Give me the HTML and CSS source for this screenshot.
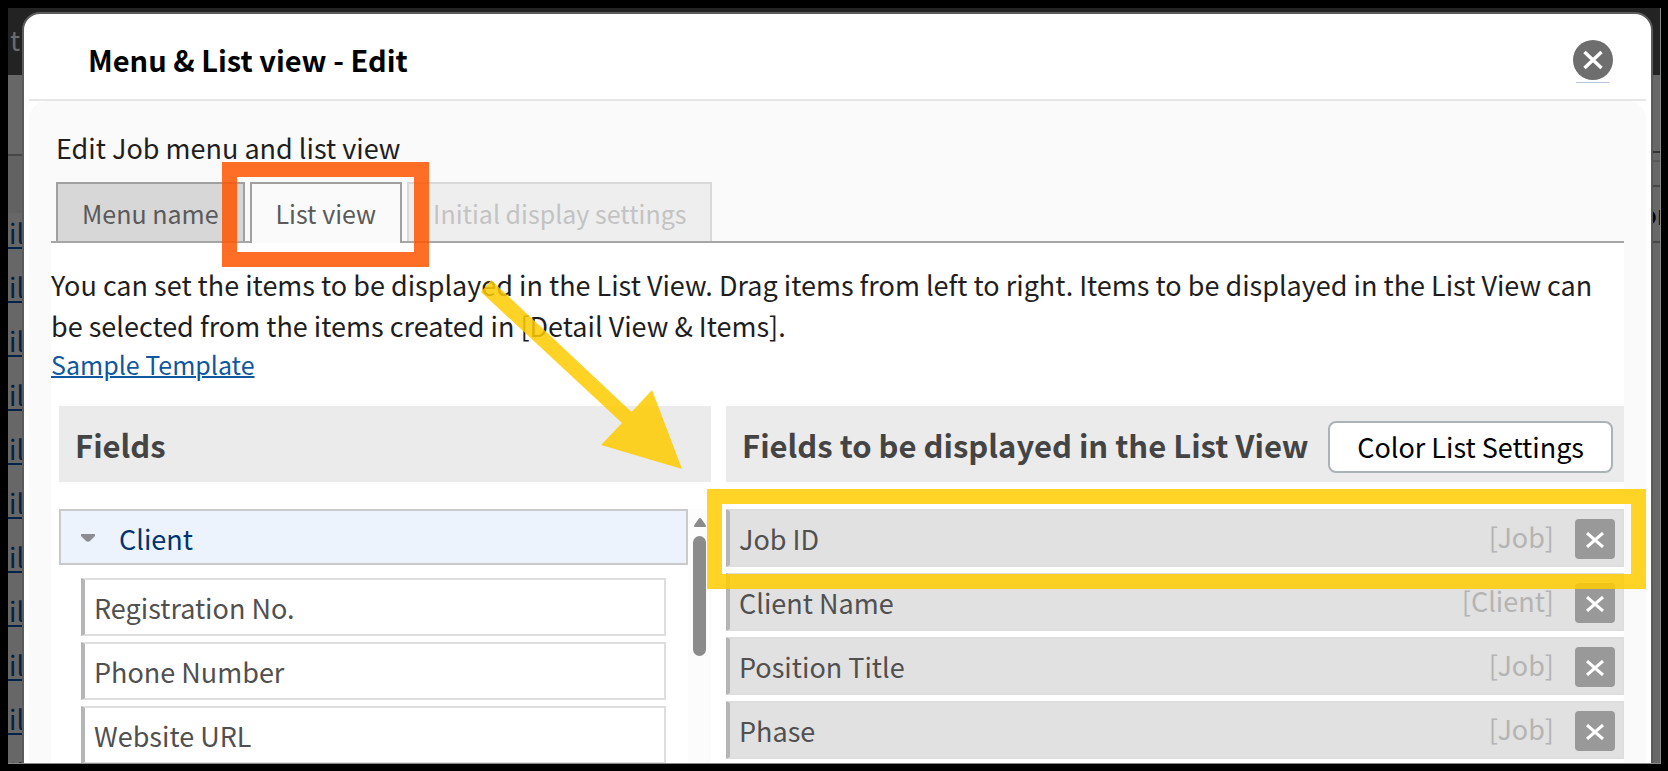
FILE: index.html
```
<!DOCTYPE html>
<html lang="en">
<head>
    <meta charset="UTF-8">
    <meta name="viewport" content="width=device-width, initial-scale=1.0">
    <title>Menu &amp; List view - Edit</title>
    <link rel="stylesheet" href="styles.css">
</head>
<body>
    <div class="page">
        <!-- dimmed page behind the dialog -->
        <div class="behind">
            <div class="behind-bar">t</div>
            <div class="behind-left">
                <div class="behind-head"></div>
                <a href="#">il</a>
                <a href="#">il</a>
                <a href="#">il</a>
                <a href="#">il</a>
                <a href="#">il</a>
                <a href="#">il</a>
                <a href="#">il</a>
                <a href="#">il</a>
                <a href="#">il</a>
                <a href="#">il</a>
                <a href="#">il</a>
            </div>
            <div class="behind-right">
                <div class="line dark"></div>
                <div class="line thin"></div>
                <div class="line"></div>
                <b>or</b>
                <div class="line"></div>
            </div>
        </div>

        <div class="modal" role="dialog" aria-labelledby="modal-title">
            <div class="modal-header">
                <h1 id="modal-title">Menu &amp; List view - Edit</h1>
                <button class="close" type="button" aria-label="Close">
                    <svg width="40" height="43" viewBox="0 0 40 43">
                        <circle cx="20" cy="20" r="20" fill="#6e6e6e"/>
                        <path d="M11.500 12L28.500 28M28.500 12L11.500 28" stroke="#fff" stroke-width="3.500"/>
                        <path d="M3 42.500H36" stroke="#b4c5dc"/>
                    </svg>
                </button>
            </div>

            <div class="modal-body">
                <p class="lead">Edit Job menu and list view</p>
                <div class="tabs">
                    <button class="tab" type="button">Menu name</button>
                    <button class="tab active" type="button">List view<span class="mark mark-tab"></span></button>
                    <button class="tab" type="button" disabled>Initial display settings</button>
                </div>

                <div class="panel">
                    <p class="intro">You can set the items to be displayed in the List View. Drag items from left to right. Items to be displayed in the List View can be selected from the items created in [Detail View &amp; Items].</p>
                    <a class="sample" href="#">Sample Template</a>

                    <div class="columns">
                        <div class="column">
                            <div class="column-head">
                                <h2>Fields</h2>
                            </div>
                            <div class="scroll-area">
                                <div class="field-groups">
                                    <button class="group" type="button">
                                        <svg width="14" height="8" viewBox="0 0 14 8"><path d="M0 0H14V2L9 7Q7 8.500 5 7L0 2Z" fill="#8b8d90"/></svg>
                                        Client
                                    </button>
                                    <ul class="items">
                                        <li class="item">Registration No.</li>
                                        <li class="item">Phone Number</li>
                                        <li class="item">Website URL</li>
                                    </ul>
                                </div>
                                <div class="scrollbar">
                                    <svg width="12" height="9" viewBox="0 0 12 9"><path d="M1 9Q0 9 0 7.500L4.500 1Q6 -1 7.500 1L12 7.500Q12 9 11 9Z" fill="#8b8b8b"/></svg>
                                    <div class="thumb"></div>
                                </div>
                            </div>
                            <svg class="arrow" width="203" height="190" viewBox="0 0 203 190">
                                <path d="M11 0L151.500 132L172 110L202 189L121 165L142 143L1 12Z" fill="#fc0"/>
                            </svg>
                        </div>

                        <div class="column">
                            <div class="column-head">
                                <h2>Fields to be displayed in the List View</h2>
                                <button class="color-btn" type="button">Color List Settings</button>
                            </div>
                            <ul class="selected">
                                <li class="item">
                                    Job ID
                                    <span class="source">[Job]</span>
                                    <button class="remove" type="button" aria-label="Remove Job ID"><svg width="18" height="16" viewBox="0 0 18 16"><path d="M1 1L17 15M17 1L1 15"/></svg></button>
                                    <span class="mark mark-row"></span>
                                </li>
                                <li class="item">
                                    Client Name
                                    <span class="source">[Client]</span>
                                    <button class="remove" type="button" aria-label="Remove Client Name"><svg width="18" height="16" viewBox="0 0 18 16"><path d="M1 1L17 15M17 1L1 15"/></svg></button>
                                </li>
                                <li class="item">
                                    Position Title
                                    <span class="source">[Job]</span>
                                    <button class="remove" type="button" aria-label="Remove Position Title"><svg width="18" height="16" viewBox="0 0 18 16"><path d="M1 1L17 15M17 1L1 15"/></svg></button>
                                </li>
                                <li class="item">
                                    Phase
                                    <span class="source">[Job]</span>
                                    <button class="remove" type="button" aria-label="Remove Phase"><svg width="18" height="16" viewBox="0 0 18 16"><path d="M1 1L17 15M17 1L1 15"/></svg></button>
                                </li>
                            </ul>
                        </div>
                    </div>
                </div>
            </div>
        </div>
    </div>
</body>
</html>
```
FILE: styles.css
```
* {
    box-sizing: border-box;
}
body {
    margin: 0;
    padding: 8px 7px 7px 8px;
    height: 100vh;
    background-color: #000;
    color: #1e1e1e;
    font-family: "Noto Sans CJK JP", sans-serif;
    font-size: 27px;
}
h1, h2, p, ul {
    margin: 0;
    padding: 0;
}
ul {
    list-style: none;
}
button {
    font: inherit;
    cursor: pointer;
}
svg {
    display: block;
}
.page {
    position: relative;
    height: 100%;
    overflow: hidden;
    border-right: 1px solid #888;
    border-bottom: 1px solid #888;
    background-color: #676767;
}

/* dimmed page */
.behind {
    display: grid;
    grid-template-columns: 14px 7px;
    justify-content: space-between;
}
.behind-bar {
    grid-column: 1 / -1;
    height: 67px;
    padding-left: 2px;
    background-color: #232323;
    color: #6b6b6b;
    line-height: 64px;
}
.behind-head {
    height: 138px;
    border-bottom: 57px solid #626262;
    background: linear-gradient(#474747, #474747) 0 100% / 100% 2px no-repeat;
    background-origin: padding-box;
    background-clip: padding-box;
}
.behind-left a {
    display: block;
    height: 36px;
    margin-bottom: 18px;
    padding-left: 1px;
    border-bottom: 2px solid #042243;
    color: #042243;
    line-height: 40px;
    text-decoration: none;
}
.behind-right {
    display: flex;
    flex-direction: column;
    padding-top: 76px;
    color: #000;
    line-height: 54px;
    text-indent: -13px;
}
.behind-right .line {
    flex: none;
    height: 2px;
    background-color: #474747;
}
.behind-right .dark {
    background-color: #333;
}
.behind-right .thin {
    margin: 7px 0 23px;
    background-color: #585858;
}

/* dialog */
.modal {
    position: absolute;
    top: 4px;
    right: 7px;
    bottom: -20px;
    left: 14px;
    display: flex;
    flex-direction: column;
    padding: 0 5px;
    border: 2px solid #5b5b5b;
    border-radius: 18px;
    background-color: #fff;
}
.modal-header {
    display: flex;
    flex: none;
    align-items: center;
    justify-content: space-between;
    height: 87px;
    padding: 5px 33px 0 59px;
    border-bottom: 2px solid #e6e6e6;
}
.modal-header h1 {
    color: #000;
    font-size: 29px;
    line-height: 40px;
}
.close {
    padding: 5px 0 0;
    border: none;
    background: none;
}
.modal-body {
    display: flex;
    flex: 1;
    flex-direction: column;
    min-height: 0;
    padding: 27px 22px 0;
    border-radius: 18px 18px 0 0;
    background-color: #fafafa;
}
.lead {
    padding-left: 5px;
    margin-bottom: 14px;
    line-height: 40px;
}

/* tabs */
.tabs {
    display: flex;
    gap: 5px;
    padding-left: 5px;
    border-bottom: 2px solid #a6a6a6;
}
.tab {
    position: relative;
    height: 59px;
    padding: 1px 24px 0;
    border: 2px solid #a0a0a0;
    border-bottom: none;
    background-color: #d7d7d7;
    color: #5a5a5a;
    font-size: 25px;
    line-height: 40px;
}
.tab.active {
    height: 61px;
    margin-bottom: -2px;
    padding-bottom: 2px;
    background-color: #fafafa;
}
.tab:disabled {
    border-color: #d8d8d8;
    background-color: #eee;
    color: #c3c3c3;
}

/* highlight frames */
.mark {
    position: absolute;
    z-index: 2;
    border: 15px solid;
    opacity: 0.85;
    pointer-events: none;
}
.mark-tab {
    inset: -22px -29px -24px -30px;
    border-color: #f50;
}
.mark-row {
    inset: -22px -24px -24px -23px;
    border-color: #fc0;
}

.panel {
    flex: 1;
    min-height: 0;
    padding: 21px 0 0;
    background-color: #fff;
}
.intro {
    line-height: 41px;
}
.sample {
    display: block;
    width: fit-content;
    color: #0f57a0;
    font-size: 25px;
    line-height: 36px;
    text-decoration-thickness: 2px;
}
.columns {
    display: grid;
    grid-template-columns: 652fr 898fr;
    gap: 15px;
    padding: 24px 0 0 8px;
}
.column {
    position: relative;
    min-width: 0;
}
.column-head {
    display: flex;
    align-items: center;
    justify-content: space-between;
    height: 76px;
    margin-bottom: 27px;
    padding: 2px 11px 0 16px;
    background-color: #ebebeb;
    color: #444;
}
.column-head h2 {
    font-size: 31px;
    line-height: 48px;
    white-space: nowrap;
}
.color-btn {
    height: 52px;
    margin-top: 4px;
    padding: 0 27px;
    border: 2px solid #acb3b6;
    border-radius: 8px;
    background-color: #fff;
    color: #000;
    line-height: 44px;
    white-space: nowrap;
}
.arrow {
    position: absolute;
    z-index: 2;
    top: -126px;
    right: 28px;
    opacity: 0.85;
}
.scroll-area {
    display: flex;
}
.field-groups {
    flex: 1;
}
.group {
    display: flex;
    align-items: center;
    gap: 24px;
    width: 100%;
    height: 56px;
    padding: 2px 20px 0;
    border: 2px solid #cacaca;
    background-color: #ecf3fc;
    color: #003370;
}
.items {
    padding: 13px 22px 0;
}
.item {
    position: relative;
    display: flex;
    align-items: center;
    height: 58px;
    margin-bottom: 6px;
    padding: 1px 7px 0 9px;
    border: 2px solid #dedede;
    border-left: 4px solid #b5b5b5;
    color: #505050;
}
.selected .item {
    background-color: #e1e1e1;
}
.source {
    margin-left: auto;
    padding-bottom: 4px;
    color: #b4b4b4;
}
.remove {
    display: flex;
    align-items: center;
    justify-content: center;
    width: 40px;
    height: 40px;
    margin-left: 21px;
    padding: 2px 0 0;
    border: none;
    border-radius: 4px;
    background-color: #999;
}
.remove path {
    stroke: #fff;
    stroke-width: 3;
}
.scrollbar {
    display: flex;
    flex-direction: column;
    align-items: center;
    gap: 9px;
    width: 23px;
    padding-top: 9px;
    background-color: #fcfcfc;
}
.thumb {
    width: 13px;
    height: 120px;
    border-radius: 7px;
    background-color: #8b8b8b;
}
```
